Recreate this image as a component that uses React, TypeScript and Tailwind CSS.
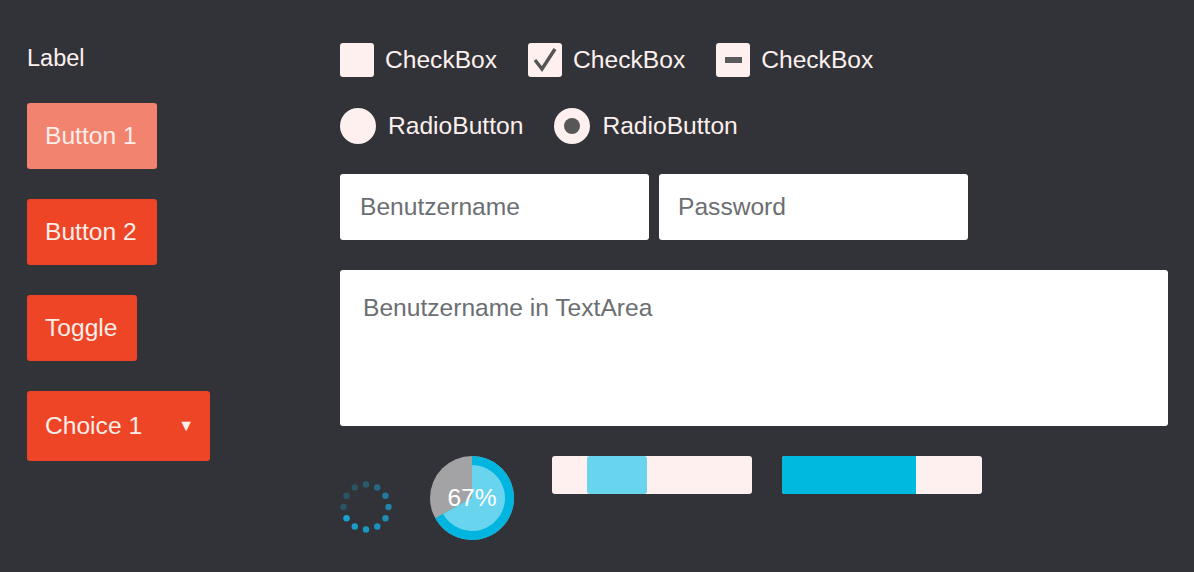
import React from "react";

const font = { fontFamily: '"Liberation Sans", Arial, sans-serif' };

function CheckBox({ kind }: { kind: "empty" | "checked" | "mixed" }) {
  return (
    <div className="flex items-center gap-[11px]">
      <div className="w-[34px] h-[34px] rounded-[3px] bg-[#fdf0ee] flex items-center justify-center">
        {kind === "checked" && (
          <svg width="28" height="28" viewBox="0 0 28 28">
            <path d="M4 14 L11 23 L24 3" fill="none" stroke="#555555" strokeWidth="3.4" strokeLinejoin="miter" />
          </svg>
        )}
        {kind === "mixed" && <div className="w-[17px] h-[6px] bg-[#5a5a5a]" />}
      </div>
      <span className="text-[24.6px] text-[#fdf0ee] leading-none">CheckBox</span>
    </div>
  );
}

function Radio({ selected }: { selected?: boolean }) {
  return (
    <div className="flex items-center gap-[12px]">
      <div className="w-[36px] h-[36px] rounded-full bg-[#fdf0ee] flex items-center justify-center">
        {selected && <div className="w-[16px] h-[16px] rounded-full bg-[#575757]" />}
      </div>
      <span className="text-[24.6px] text-[#fdf0ee] leading-none">RadioButton</span>
    </div>
  );
}

function Spinner() {
  const ops = [0.35, 0.5, 0.65, 0.75, 0.8, 0.85, 0.9, 0.95, 1, 0.3, 0.3, 0.3];
  return (
    <svg width="54" height="54" viewBox="0 0 54 54">
      {ops.map((o, i) => {
        const a = (i * 30 * Math.PI) / 180;
        const cx = 27 + 22.5 * Math.sin(a);
        const cy = 27 - 22.5 * Math.cos(a);
        return <circle key={i} cx={cx} cy={cy} r="3.2" fill="#1aa2d2" opacity={o} />;
      })}
    </svg>
  );
}

function Pie() {
  const cx = 42, cy = 42, R = 42, r = 33;
  const frac = 0.67;
  const a = frac * 2 * Math.PI;
  const ex = cx + R * Math.sin(a), ey = cy - R * Math.cos(a);
  const ix = cx + r * Math.sin(a), iy = cy - r * Math.cos(a);
  return (
    <div className="relative w-[84px] h-[84px]">
      <svg width="84" height="84" viewBox="0 0 84 84">
        <circle cx={cx} cy={cy} r={R} fill="#a3a3a6" />
        <path d={`M${cx} ${cy} L${cx} ${cy - R} A${R} ${R} 0 1 1 ${ex} ${ey} Z`} fill="#00b5df" />
        <path d={`M${cx} ${cy} L${cx} ${cy - r} A${r} ${r} 0 1 1 ${ix} ${iy} Z`} fill="#69d4ee" />
      </svg>
      <div className="absolute inset-0 flex items-center justify-center text-white text-[24.6px] leading-none">67%</div>
    </div>
  );
}

export default function App() {
  return (
    <div className="w-[1194px] h-[572px] bg-[#313338] flex overflow-hidden" style={font}>
      <div className="w-[313px] ml-[27px] flex flex-col">
        <div className="mt-[46px] text-[23.5px] leading-[25px] text-[#fdf0ee]">Label</div>
        <div className="mt-[32px] w-[130px] h-[66px] rounded-[3px] bg-[#f2836f] text-[#fdeee9] text-[24.6px] flex items-center pl-[18px]">Button 1</div>
        <div className="mt-[30px] w-[130px] h-[66px] rounded-[3px] bg-[#ee4527] text-[#fdeee9] text-[24.6px] flex items-center pl-[18px]">Button 2</div>
        <div className="mt-[30px] w-[110px] h-[66px] rounded-[3px] bg-[#ee4527] text-[#fdeee9] text-[24.6px] flex items-center pl-[18px]">Toggle</div>
        <div className="mt-[30px] w-[183px] h-[70px] rounded-[3px] bg-[#ee4527] text-[#fdeee9] text-[24.6px] flex items-center justify-between pl-[18px] pr-[16px]">
          <span>Choice 1</span>
          <span className="text-[16px]">▼</span>
        </div>
      </div>
      <div className="flex flex-col">
        <div className="mt-[43px] flex items-center gap-[31px]">
          <CheckBox kind="empty" />
          <CheckBox kind="checked" />
          <CheckBox kind="mixed" />
        </div>
        <div className="mt-[31px] flex items-center gap-[31px]">
          <Radio />
          <Radio selected />
        </div>
        <div className="mt-[30px] flex gap-[10px]">
          <div className="w-[309px] h-[66px] rounded-[3px] bg-white flex items-center pl-[20px] text-[24.6px] text-[#6b6e72]">Benutzername</div>
          <div className="w-[309px] h-[66px] rounded-[3px] bg-white flex items-center pl-[19px] text-[24.6px] text-[#6b6e72]">Password</div>
        </div>
        <div className="mt-[30px] w-[828px] h-[156px] rounded-[3px] bg-white pl-[23px] pt-[24px] text-[24.6px] leading-[28px] text-[#6b6e72]">Benutzername in TextArea</div>
        <div className="mt-[30px] flex items-start">
          <div className="mt-[24px] -ml-[1px]">
            <Spinner />
          </div>
          <div className="ml-[37px]">
            <Pie />
          </div>
          <div className="ml-[38px] w-[200px] h-[38px] rounded-[3px] bg-[#fdf0ee] flex">
            <div className="ml-[35px] w-[60px] h-full rounded-[3px] bg-[#69d4ee]" />
          </div>
          <div className="ml-[30px] w-[200px] h-[38px] rounded-[3px] bg-[#fdf0ee] flex overflow-hidden">
            <div className="w-[134px] h-full bg-[#00b9df]" />
          </div>
        </div>
      </div>
    </div>
  );
}
